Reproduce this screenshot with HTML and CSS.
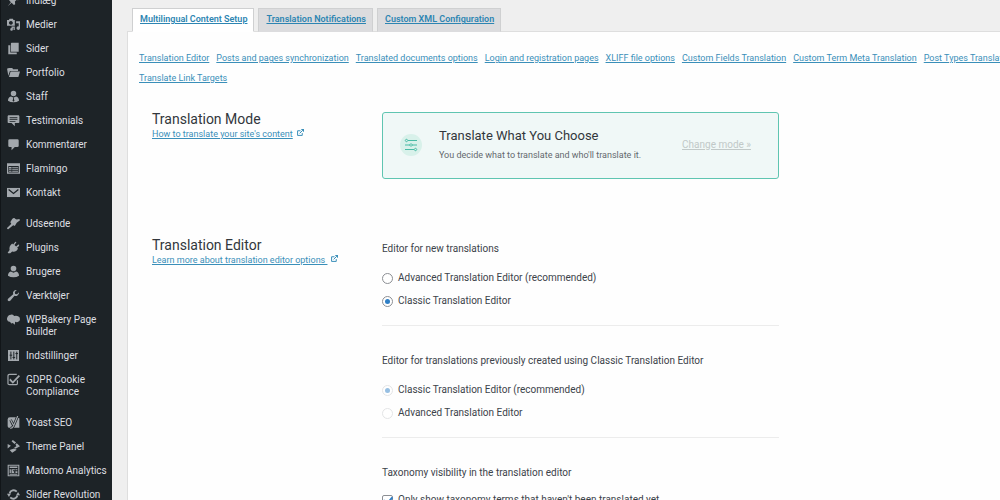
FILE: index.html
```html
<!DOCTYPE html>
<html lang="da">
<head>
<meta charset="utf-8">
<title>Multilingual Content Setup</title>
<link rel="stylesheet" href="styles.css">
</head>
<body>
<svg class="defs" aria-hidden="true">
  <symbol id="i-pin" viewBox="0 0 20 20"><path d="M10.4 3l1-1.9 7.5 7.5-1.9 1-2.3-.5-2.5 2.5.4 4-2 1.4-3.5-3.6L1 19l5-6.5L3 9.300l1.500-2 3.900.500 2.500-2.500z"/></symbol>
  <symbol id="i-media" viewBox="0 0 20 20"><path fill-rule="evenodd" d="M0 3h3l1-2h5l1 2h2v9H0zm6 1.500a3 3 0 1 0 .01 0z"/><path d="M14 5h6v10.500a2.700 2.700 0 1 1-2-2.500V8h-4zM7 13h5v5.500h-2V15H9v2.500a2 2 0 1 1-2-2z"/></symbol>
  <symbol id="i-pages" viewBox="0 0 20 20"><path d="M7 1h11v14H6V2zM2 5h3v11h10v3H2z"/></symbol>
  <symbol id="i-folder" viewBox="0 0 20 20"><path d="M0 4h2V3h6l1.500 2H17v2.500H4.500L2 15zM5.500 8.500H20L17.500 17H3z"/></symbol>
  <symbol id="i-staff" viewBox="0 0 20 20"><path fill-rule="evenodd" d="M10 1a4 4 0 0 1 0 8.500A4 4 0 0 1 10 1zM6 10l3 1h2l3-1c3 1 4.500 3 4.500 6.500Q15 19 10 19t-8.500-2.500C1.500 13 3 11 6 10zm3 1.500l.5 2-1 3L10 18l1.500-1.500-1-3 .5-2z"/></symbol>
  <symbol id="i-testimonial" viewBox="0 0 20 20"><path fill-rule="evenodd" d="M2 2h16l1 1v10l-1 1h-6v5l-5-5H2l-1-1V3zm2 3v1.400h12V5zm0 3v1.400h12V8zm0 3v1.400h9V11z"/></symbol>
  <symbol id="i-comment" viewBox="0 0 20 20"><path d="M4 2h12q2 0 2 2v8q0 2-2 2h-4l-5 5v-5H4q-2 0-2-2V4q0-2 2-2z"/></symbol>
  <symbol id="i-form" viewBox="0 0 20 20"><path fill-rule="evenodd" d="M0 2h20v16H0zm2 4v10h16V6z"/><path d="M3 7.500h4V10H3zM8 8h9v1.500H8zM3 11h4v1.500H3zM8 11h9v1.500H8zM3 13.800h4V15H3zM8 13.800h9V15H8z"/></symbol>
  <symbol id="i-mail" viewBox="0 0 20 20"><path d="M0 3h20v14H0z"/><path d="M2.500 5.500l7.500 6 7.500-6" fill="none" stroke="#1d2327" stroke-width="2"/></symbol>
  <symbol id="i-brush" viewBox="0 0 20 20"><path d="M8 3q3-3 5 0l2 1 4-1 1 2-5 4-3 5-2-1.500-1 .5-7 6q-2 0-2-2l6-6 .500-1.500L5 8z"/></symbol>
  <symbol id="i-plug" viewBox="0 0 20 20"><path d="M12.500 1.500q1.500-1 2 .5l-3 4 2.500 2.500 3.500-3q2 0 1 2l-3 3 1.500 1.500q-3 6-9 4L5 19H2l-1-1 3-4Q2.500 8 8 4l1.500 1.500z"/></symbol>
  <symbol id="i-user" viewBox="0 0 20 20"><path d="M10 1a4 4 0 0 1 0 8.700A4 4 0 0 1 10 1zM6 10l4 2 4-2c3 1 4.500 3 4.500 6.500Q15 19 10 19t-8.500-2.500C1.500 13 3 11 6 10z"/></symbol>
  <symbol id="i-wrench" viewBox="0 0 20 20"><path d="M16.500 9.500q-2 2-5 1L5 18q-2 1.500-3.500 0T2 14.500L9.500 8q-1-3 1-5t4.500-1.500l-3 3 .500 3 3 .500 3-3q.500 2.500-2 4.500z"/></symbol>
  <symbol id="i-bakery" viewBox="0 0 20 20"><path d="M6 2.500q3-.500 5 2 4-1 6 .500 3 .500 3 4.500 0 3.500-3.500 4.500-2 .500-4-.500L12 18l-3-2.500Q6 17.500 5 14-.500 13.500 0 8.500 1 2.500 6 2.500z"/></symbol>
  <symbol id="i-sliders" viewBox="0 0 20 20"><path d="M1.500 1.500h17v17h-17z"/><path d="M6 4v12M10.500 4v12M15 4v12M4 9.500h4M8.500 13h4M13 7h4" fill="none" stroke="#1d2327" stroke-width="1.500"/></symbol>
  <symbol id="i-check" viewBox="0 0 20 20"><path d="M16 11v5q0 2-2 2H4q-2.500 0-2.500-2V4.500Q1.500 2 4 2h11" fill="none" stroke="currentColor" stroke-width="1.800"/><path d="M5 8.500l4 4L18 3l2 2L9 16.500 3.500 11z"/></symbol>
  <symbol id="i-yoast" viewBox="0 0 20 20"><path d="M4.500 2H14l5 1.500V18H2.500q-1.500-1-1.500-3V5.500Q1 2 4.500 2z"/><path d="M5.500 6l4 8M16.500 0L10 15.500Q8.500 19 5 19" fill="none" stroke="#1d2327" stroke-width="4"/><path d="M5.500 6l4 7.500M16.500 0L10 15.500Q8.500 19 5 19" fill="none" stroke="currentColor" stroke-width="1.800"/></symbol>
  <symbol id="i-theme" viewBox="0 0 20 20"><path d="M7 2l2-2 5 4-2.500 2zM13 7l2-2 5 4.500-7 4-2-2 3.500-2zM1 6l5 3-5 4zM4 15.500l7-2.500 4 2-7 4.500z"/></symbol>
  <symbol id="i-matomo" viewBox="0 0 20 20"><path fill-rule="evenodd" d="M1 1h18v18H1zm1.700 1.700v14.600h14.600V2.700z"/><path d="M4 4h12v2H4zM4 8h2v6H4zM7 8h5v1.500H9V11h2v3H7zM13 8h3v1.500h-3zM13 11h3v3h-3zM4 15h12v1.500H4z"/></symbol>
  <symbol id="i-refresh" viewBox="0 0 20 20"><path d="M4 8.500A6.500 6.500 0 0 1 15 5.500M16 11.500A6.500 6.500 0 0 1 5 14.500" fill="none" stroke="currentColor" stroke-width="3"/><path d="M14 11l3-5 3 5zM0 9h6l-3 5z"/></symbol>
  <symbol id="i-external" viewBox="0 0 12 12"><path d="M6 3H1v8h8V7M4.500 7.500L9.500 2.500" fill="none" stroke="currentColor" stroke-width="1.700"/><path d="M6.500 0H12v5.500z"/></symbol>
</svg>
<div class="app">
  <nav class="sidebar" aria-label="Menu">
    <ul class="menu">
      <li><a class="menu-link" href="#"><svg class="icon"><use href="#i-pin"/></svg>Indlæg</a></li>
      <li><a class="menu-link" href="#"><svg class="icon"><use href="#i-media"/></svg>Medier</a></li>
      <li><a class="menu-link" href="#"><svg class="icon"><use href="#i-pages"/></svg>Sider</a></li>
      <li><a class="menu-link" href="#"><svg class="icon"><use href="#i-folder"/></svg>Portfolio</a></li>
      <li><a class="menu-link" href="#"><svg class="icon"><use href="#i-staff"/></svg>Staff</a></li>
      <li><a class="menu-link" href="#"><svg class="icon"><use href="#i-testimonial"/></svg>Testimonials</a></li>
      <li><a class="menu-link" href="#"><svg class="icon"><use href="#i-comment"/></svg>Kommentarer</a></li>
      <li><a class="menu-link" href="#"><svg class="icon"><use href="#i-form"/></svg>Flamingo</a></li>
      <li><a class="menu-link" href="#"><svg class="icon"><use href="#i-mail"/></svg>Kontakt</a></li>
    </ul>
    <ul class="menu">
      <li><a class="menu-link" href="#"><svg class="icon"><use href="#i-brush"/></svg>Udseende</a></li>
      <li><a class="menu-link" href="#"><svg class="icon"><use href="#i-plug"/></svg>Plugins</a></li>
      <li><a class="menu-link" href="#"><svg class="icon"><use href="#i-user"/></svg>Brugere</a></li>
      <li><a class="menu-link" href="#"><svg class="icon"><use href="#i-wrench"/></svg>Værktøjer</a></li>
      <li><a class="menu-link" href="#"><svg class="icon"><use href="#i-bakery"/></svg>WPBakery Page Builder</a></li>
      <li><a class="menu-link" href="#"><svg class="icon"><use href="#i-sliders"/></svg>Indstillinger</a></li>
      <li><a class="menu-link" href="#"><svg class="icon"><use href="#i-check"/></svg>GDPR Cookie Compliance</a></li>
    </ul>
    <ul class="menu">
      <li><a class="menu-link" href="#"><svg class="icon"><use href="#i-yoast"/></svg>Yoast SEO</a></li>
      <li><a class="menu-link" href="#"><svg class="icon"><use href="#i-theme"/></svg>Theme Panel</a></li>
      <li><a class="menu-link" href="#"><svg class="icon"><use href="#i-matomo"/></svg>Matomo Analytics</a></li>
      <li><a class="menu-link" href="#"><svg class="icon"><use href="#i-refresh"/></svg>Slider Revolution</a></li>
    </ul>
  </nav>
  <main class="content">
    <nav class="tabs" aria-label="Settings">
      <a class="tab tab-active" href="#">Multilingual Content Setup</a>
      <a class="tab" href="#">Translation Notifications</a>
      <a class="tab" href="#">Custom XML Configuration</a>
    </nav>
    <div class="panel">
      <nav class="sublinks" aria-label="Sections">
        <div class="sublinks-row">
          <a href="#">Translation Editor</a>
          <a href="#">Posts and pages synchronization</a>
          <a href="#">Translated documents options</a>
          <a href="#">Login and registration pages</a>
          <a href="#">XLIFF file options</a>
          <a href="#">Custom Fields Translation</a>
          <a href="#">Custom Term Meta Translation</a>
          <a href="#">Post Types Translation</a>
        </div>
        <div class="sublinks-row">
          <a href="#">Translate Link Targets</a>
        </div>
      </nav>
      <section class="section section-mode">
        <header>
          <h2 class="title">Translation Mode</h2>
          <div class="help"><a href="#">How to translate your site's content</a><svg class="external"><use href="#i-external"/></svg></div>
        </header>
        <div class="mode">
          <svg class="mode-icon" viewBox="0 0 22 22" aria-hidden="true">
            <circle cx="11" cy="11" r="11" fill="#d8f1ea"/>
            <path d="M8 6.500h9M5 11h12M5 15.500h9" fill="none" stroke="#48bba5" stroke-width="1.200"/>
            <path d="M6.500 5.300a1.200 1.200 0 1 0 .01 0zM11 9.800a1.200 1.200 0 1 0 .01 0zM15.500 14.300a1.200 1.200 0 1 0 .01 0z" fill="#d8f1ea" stroke="#48bba5"/>
          </svg>
          <div class="mode-text">
            <h3 class="mode-title">Translate What You Choose</h3>
            <p class="mode-note">You decide what to translate and who'll translate it.</p>
          </div>
          <a class="mode-change" href="#">Change mode »</a>
        </div>
      </section>
      <section class="section section-editor">
        <header>
          <h2 class="title">Translation Editor</h2>
          <div class="help"><a href="#">Learn more about translation editor options&nbsp;</a><svg class="external"><use href="#i-external"/></svg></div>
        </header>
        <div class="groups">
          <fieldset class="group">
            <legend>Editor for new translations</legend>
            <label class="option"><input type="radio" name="new">Advanced Translation Editor (recommended)</label>
            <label class="option"><input type="radio" name="new" checked>Classic Translation Editor</label>
          </fieldset>
          <fieldset class="group">
            <legend>Editor for translations previously created using Classic Translation Editor</legend>
            <label class="option"><input type="radio" name="old" checked disabled>Classic Translation Editor (recommended)</label>
            <label class="option"><input type="radio" name="old" disabled>Advanced Translation Editor</label>
          </fieldset>
          <fieldset class="group group-checks">
            <legend>Taxonomy visibility in the translation editor</legend>
            <label class="option"><input type="checkbox" checked>Only show taxonomy terms that haven't been translated yet</label>
          </fieldset>
        </div>
      </section>
    </div>
  </main>
</div>
</body>
</html>
```

FILE: styles.css
```css
* {
  box-sizing: border-box;
}

body {
  margin: 0;
  background: #efefef;
  color: #3c434a;
  font: 10px/12px Roboto, "Liberation Sans", sans-serif;
}

a {
  color: #3a8fb9;
}

.defs {
  display: none;
}

.app {
  display: flex;
  height: 100vh;
  overflow: hidden;
}

/* Sidebar: the menu is scrolled slightly past its first entry */
.sidebar {
  flex: 0 0 112px;
  border-left: 1px solid #111518;
  background: #1d2327;
}

.menu {
  margin: 0 0 7px;
  padding: 0;
  list-style: none;
}

.menu:first-child {
  margin-top: -11px;
}

.menu-link {
  display: flex;
  gap: 6px;
  padding: 6px 4px 6px 6px;
  color: #dddfe1;
  text-decoration: none;
}

.icon {
  flex: none;
  width: 13px;
  height: 13px;
  margin: -1px 0 0;
  color: #a3a8ad;
  fill: currentColor;
}

.content {
  flex: 1;
  min-width: 0;
  display: flex;
  flex-direction: column;
  padding: 8px 0 0 15px;
}

.tabs {
  display: flex;
  gap: 4px;
  padding-left: 5px;
  margin-bottom: -1px;
  z-index: 1;
}

.tab {
  padding: 4px 6px 6px 7px;
  border: 1px solid #cfd0d1;
  border-bottom-color: #dcdcde;
  background: #dcdcde;
  color: #2d85b2;
  font-size: 9px;
  font-weight: 600;
}

.tab-active {
  background: #fff;
  border-bottom-color: #fff;
}

.panel {
  flex: 1;
  padding-top: 19px;
  border-top: 1px solid #dedede;
  border-left: 1px solid #dedede;
  background: #fefefe;
}

.sublinks {
  padding-left: 11px;
  overflow: hidden;
  font-size: 9px;
  line-height: 14px;
}

.sublinks-row {
  display: flex;
  gap: 7px;
  margin-bottom: 6px;
  white-space: nowrap;
}

.section {
  display: grid;
  grid-template-columns: 230px minmax(0, 397px);
  padding-left: 24px;
}

.section-mode {
  padding-top: 21px;
}

.section-editor {
  padding-top: 59px;
}

.title {
  margin: 0 0 2px;
  color: #32373c;
  font-size: 14px;
  font-weight: 400;
  line-height: 14px;
}

.help {
  display: flex;
  gap: 4px;
  font-size: 9px;
  line-height: 12px;
}

.external {
  width: 7px;
  height: 7px;
  margin-top: 1px;
  color: #3a8fb9;
  fill: currentColor;
}

.mode {
  display: flex;
  align-items: center;
  padding: 15px 27px 17px 17px;
  border: 1px solid #5fc5b1;
  border-radius: 3px;
  background: #f0f8f7;
}

.mode-icon {
  width: 22px;
  height: 22px;
}

.mode-text {
  flex: 1;
  padding-left: 17px;
}

.mode-title {
  margin: 0 0 5px;
  color: #32373c;
  font-size: 13px;
  font-weight: 400;
  line-height: 16px;
}

.mode-note {
  margin: 0;
  color: #64696e;
  font-size: 9px;
}

.mode-change {
  color: #c1c9c8;
}

.groups {
  padding-top: 5px;
}

.group {
  margin: 0 0 29px;
  padding: 0 0 18px;
  border: 0;
  border-bottom: 1px solid #ececec;
}

.group legend {
  margin-bottom: 17px;
  padding: 0;
}

.group-checks legend {
  margin-bottom: 15px;
}

.option {
  display: flex;
  align-items: center;
  gap: 5px;
  margin-bottom: 11px;
}

.option:last-child {
  margin-bottom: 0;
}

.option input {
  appearance: none;
  display: grid;
  place-content: center;
  width: 11px;
  height: 11px;
  margin: 0;
  border: 1px solid #8c8f94;
  background: #fff;
}

.option input[type="radio"] {
  border-radius: 50%;
}

.option input[type="radio"]:checked::before {
  content: "";
  width: 5px;
  height: 5px;
  border-radius: 50%;
  background: #2f7fc6;
}

.option input:disabled {
  border-color: #e4e5e6;
}

.option input[type="radio"]:disabled::before {
  opacity: 0.5;
}

.option input[type="checkbox"] {
  border-radius: 2px;
}

.option input[type="checkbox"]:checked::before {
  content: "";
  width: 4px;
  height: 7px;
  margin-bottom: 2px;
  border: solid #2f7fc6;
  border-width: 0 2px 2px 0;
  transform: rotate(40deg);
}
```
